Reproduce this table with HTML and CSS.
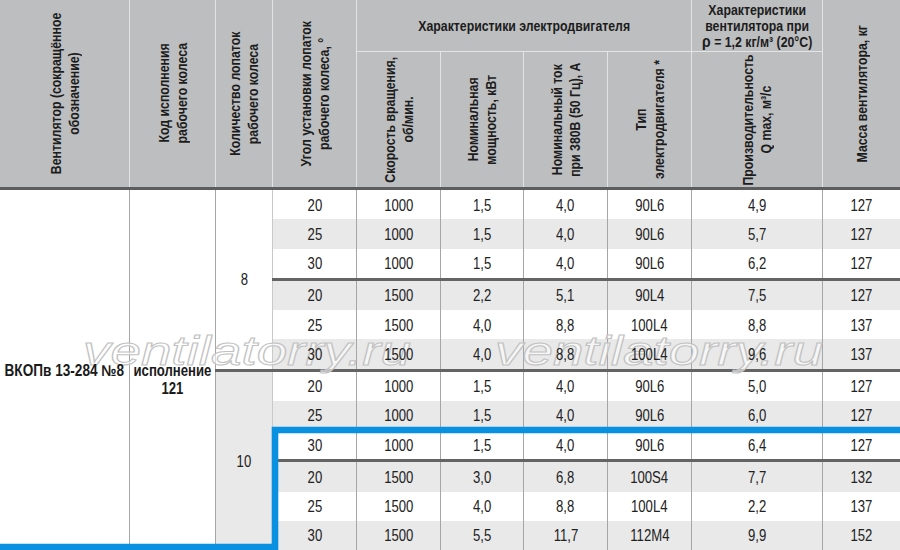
FILE: index.html
```html
<!DOCTYPE html>
<html lang="ru">
<head>
<meta charset="utf-8">
<title>ВКОПв 13-284 №8</title>
<link rel="stylesheet" href="styles.css">
</head>
<body>
<div class="sheet">
  <div class="head">
    <div class="hc tall"><span class="vt">Вентилятор (сокращённое<br>обозначение)</span></div>
    <div class="hc tall"><span class="vt">Код исполнения<br>рабочего колеса</span></div>
    <div class="hc tall"><span class="vt">Количество лопаток<br>рабочего колеса</span></div>
    <div class="hc tall"><span class="vt">Угол установки лопаток<br>рабочего колеса, °</span></div>
    <div class="hc group motor"><span class="n">Характеристики электродвигателя</span></div>
    <div class="hc group"><span class="n">Характеристики<br>вентилятора при<br><span class="rho">ρ</span> = 1,2 кг/м³ (20°C)</span></div>
    <div class="hc tall"><span class="vt">Масса вентилятора, кг</span></div>
    <div class="hc"><span class="vt">Скорость вращения,<br>об/мин.</span></div>
    <div class="hc"><span class="vt">Номинальная<br>мощность, кВт</span></div>
    <div class="hc"><span class="vt">Номинальный ток<br>при 380В (50 Гц), А</span></div>
    <div class="hc"><span class="vt">Тип<br>электродвигателя *</span></div>
    <div class="hc"><span class="vt">Производительность<br>Q max, м³/с</span></div>
  </div>

  <div class="body">
    <div class="fanname"><span class="n name">ВКОПв 13-284 №8</span></div>
    <div class="exec"><span class="n two">исполнение<br>121</span></div>
    <div class="groups">
      <div class="grp">
        <div class="blades"><span class="n">8</span></div>
        <div class="rows">
          <div class="sub">
            <div class="row"><div class="c"><span>20</span></div><div class="c"><span>1000</span></div><div class="c"><span>1,5</span></div><div class="c"><span>4,0</span></div><div class="c"><span>90L6</span></div><div class="c"><span>4,9</span></div><div class="c"><span>127</span></div></div>
            <div class="row g"><div class="c"><span>25</span></div><div class="c"><span>1000</span></div><div class="c"><span>1,5</span></div><div class="c"><span>4,0</span></div><div class="c"><span>90L6</span></div><div class="c"><span>5,7</span></div><div class="c"><span>127</span></div></div>
            <div class="row"><div class="c"><span>30</span></div><div class="c"><span>1000</span></div><div class="c"><span>1,5</span></div><div class="c"><span>4,0</span></div><div class="c"><span>90L6</span></div><div class="c"><span>6,2</span></div><div class="c"><span>127</span></div></div>
          </div>
          <div class="sep"></div>
          <div class="sub">
            <div class="row g"><div class="c"><span>20</span></div><div class="c"><span>1500</span></div><div class="c"><span>2,2</span></div><div class="c"><span>5,1</span></div><div class="c"><span>90L4</span></div><div class="c"><span>7,5</span></div><div class="c"><span>127</span></div></div>
            <div class="row"><div class="c"><span>25</span></div><div class="c"><span>1500</span></div><div class="c"><span>4,0</span></div><div class="c"><span>8,8</span></div><div class="c"><span>100L4</span></div><div class="c"><span>8,8</span></div><div class="c"><span>137</span></div></div>
            <div class="row g"><div class="c"><span>30</span></div><div class="c"><span>1500</span></div><div class="c"><span>4,0</span></div><div class="c"><span>8,8</span></div><div class="c"><span>100L4</span></div><div class="c"><span>9,6</span></div><div class="c"><span>137</span></div></div>
          </div>
        </div>
      </div>
      <div class="sep"></div>
      <div class="grp">
        <div class="blades alt"><span class="n">10</span></div>
        <div class="rows">
          <div class="sub">
            <div class="row"><div class="c"><span>20</span></div><div class="c"><span>1000</span></div><div class="c"><span>1,5</span></div><div class="c"><span>4,0</span></div><div class="c"><span>90L6</span></div><div class="c"><span>5,0</span></div><div class="c"><span>127</span></div></div>
            <div class="row g"><div class="c"><span>25</span></div><div class="c"><span>1000</span></div><div class="c"><span>1,5</span></div><div class="c"><span>4,0</span></div><div class="c"><span>90L6</span></div><div class="c"><span>6,0</span></div><div class="c"><span>127</span></div></div>
            <div class="row"><div class="c"><span>30</span></div><div class="c"><span>1000</span></div><div class="c"><span>1,5</span></div><div class="c"><span>4,0</span></div><div class="c"><span>90L6</span></div><div class="c"><span>6,4</span></div><div class="c"><span>127</span></div></div>
          </div>
          <div class="sep"></div>
          <div class="sub">
            <div class="row g"><div class="c"><span>20</span></div><div class="c"><span>1500</span></div><div class="c"><span>3,0</span></div><div class="c"><span>6,8</span></div><div class="c"><span>100S4</span></div><div class="c"><span>7,7</span></div><div class="c"><span>132</span></div></div>
            <div class="row"><div class="c"><span>25</span></div><div class="c"><span>1500</span></div><div class="c"><span>4,0</span></div><div class="c"><span>8,8</span></div><div class="c"><span>100L4</span></div><div class="c"><span>2,2</span></div><div class="c"><span>137</span></div></div>
            <div class="row g"><div class="c"><span>30</span></div><div class="c"><span>1500</span></div><div class="c"><span>5,5</span></div><div class="c"><span>11,7</span></div><div class="c"><span>112M4</span></div><div class="c"><span>9,9</span></div><div class="c"><span>152</span></div></div>
          </div>
        </div>
      </div>
    </div>
  </div>

  <div class="wm wm1">ventilatorry.ru</div>
  <div class="wm wm2">ventilatorry.ru</div>

  <svg class="mark" width="900" height="550" viewBox="0 0 900 550" aria-hidden="true">
    <polyline points="905,430 275,430 275,547 -5,547" fill="none" stroke="#0a90e0" stroke-width="6.6" stroke-linejoin="miter"/>
  </svg>
</div>
</body>
</html>
```

FILE: styles.css
```css
* { box-sizing: border-box; }

html, body {
  margin: 0;
  padding: 0;
  background: #ffffff;
}

.sheet {
  position: relative;
  width: 900px;
  height: 550px;
  overflow: hidden;
  font-family: "Liberation Sans", Arial, sans-serif;
  color: #222222;
}

/* narrow look: Arial-metric face compressed like Arial Narrow */
.n,
.c span {
  display: inline-block;
  white-space: nowrap;
  transform: scaleX(0.82);
}

/* ---------- header ---------- */
.head {
  display: grid;
  grid-template-columns: 129px 86px 57px 84px 84px 83px 84px 84px 131px 78px;
  grid-template-rows: 52px 135px;
  background: #bdbec0;
  border-bottom: 3px solid #5d5d5d;
  font-weight: bold;
  font-size: 15px;
  color: #1c1c1c;
}

.hc {
  display: flex;
  align-items: center;
  justify-content: center;
  border-left: 1px solid #e3e4e5;
  text-align: center;
}

.hc:first-child { border-left: none; }

.tall { grid-row: span 2; }

.group {
  border-bottom: 1px solid #e3e4e5;
  line-height: 16px;
  padding-top: 1px;
}

.motor { grid-column: span 4; }

.rho { font-size: 17px; }

.vt {
  writing-mode: vertical-rl;
  transform: rotate(180deg) scaleY(0.82);
  white-space: nowrap;
  line-height: 18px;
  text-align: center;
}

/* ---------- body ---------- */
.body {
  display: grid;
  grid-template-columns: 129px 86px 1fr;
  height: 360px;
}

.fanname,
.exec {
  display: flex;
  align-items: center;
  justify-content: center;
  text-align: center;
  font-weight: bold;
  font-size: 16px;
  line-height: 18px;
  color: #1a1a1a;
  min-width: 0;
}

.exec { border-left: 1px solid #a6a6a6; }

.fanname .name { transform: scaleX(0.85); padding-top: 2px; }
.exec .two { padding-top: 20px; }

.groups {
  display: flex;
  flex-direction: column;
}

.grp {
  flex: 1;
  display: grid;
  grid-template-columns: 57px 1fr;
}

.blades {
  display: flex;
  align-items: center;
  justify-content: center;
  border-left: 1px solid #a6a6a6;
  font-size: 16px;
  background: #ffffff;
  padding-top: 2px;
}

.blades.alt { background: #e8e9e8; }

.rows {
  display: flex;
  flex-direction: column;
}

.sub {
  flex: 1;
  display: flex;
  flex-direction: column;
}

.sep {
  height: 3px;
  flex: none;
  background: #646464;
}

.row {
  flex: 1;
  display: grid;
  grid-template-columns: 84px 84px 83px 84px 84px 131px 78px;
  background: #ffffff;
}

.row.g { background: #e8e9e8; }

.c {
  display: flex;
  align-items: center;
  justify-content: center;
  border-left: 1px solid #a6a6a6;
  font-size: 16px;
  padding-top: 2px;
}

.c:first-child { border-left-color: #c9c9c9; }

.c span,
.blades .n,
.name,
.two {
  position: relative;
  z-index: 2;
}

/* ---------- overlays ---------- */
.wm {
  position: absolute;
  top: 331px;
  z-index: 1;
  font-family: "Liberation Sans", Arial, sans-serif;
  font-style: italic;
  font-size: 40px;
  line-height: 40px;
  white-space: nowrap;
  color: rgba(255, 255, 255, 0.6);
  -webkit-text-stroke: 1px #c2c2c2;
  transform: scaleX(1.37);
  transform-origin: left top;
  pointer-events: none;
}

.wm1 { left: 83px; }
.wm2 { left: 495px; }

.mark {
  position: absolute;
  left: 0;
  top: 0;
  z-index: 3;
  pointer-events: none;
}
```
